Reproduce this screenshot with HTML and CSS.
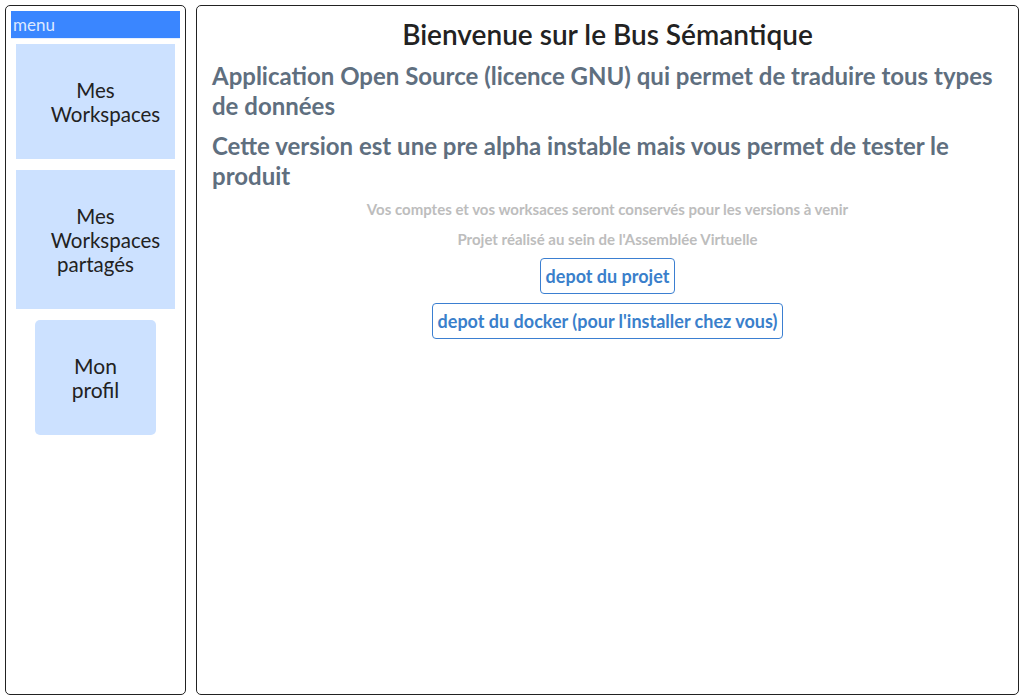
FILE: index.html
```html
<!DOCTYPE html>
<html lang="fr">
<head>
<meta charset="utf-8">
<title>Bus Sémantique</title>
<link rel="stylesheet" href="styles.css">
</head>
<body>
<div class="layout">
  <aside class="sidebar">
    <div class="menu-head">menu</div>
    <div class="card"><span>Mes</span><span class="shift">Workspaces</span></div>
    <div class="card"><span>Mes</span><span class="shift">Workspaces</span><span>partagés</span></div>
    <div class="card card-round"><span>Mon</span><span>profil</span></div>
  </aside>
  <main class="content">
    <h1 class="title">Bienvenue sur le Bus Sémantique</h1>
    <p class="lead">Application Open Source (licence GNU) qui permet de traduire tous types de données</p>
    <p class="lead lead-last">Cette version est une pre alpha instable mais vous permet de tester le produit</p>
    <p class="note">Vos comptes et vos worksaces seront conservés pour les versions à venir</p>
    <p class="note note-last">Projet réalisé au sein de l'Assemblée Virtuelle</p>
    <div class="links">
      <a class="btn" href="#">depot du projet</a>
      <a class="btn" href="#">depot du docker (pour l'installer chez vous)</a>
    </div>
  </main>
</div>
</body>
</html>
```
FILE: styles.css
```css
html, body {
  margin: 0;
  padding: 0;
  background: #fff;
}
body {
  padding: 5px;
  font-family: Lato, "Noto Sans", sans-serif;
  box-sizing: border-box;
  height: 700px;
}
.layout {
  display: flex;
  gap: 10px;
  height: 690px;
}
.sidebar {
  width: 181px;
  box-sizing: border-box;
  border: 1px solid #222;
  border-radius: 5px;
  padding: 5px;
  display: flex;
  flex-direction: column;
  align-items: stretch;
}
.menu-head {
  background: #3a86ff;
  color: #dde9ff;
  font-size: 17px;
  line-height: 27px;
  height: 27px;
  padding-left: 2px;
  border-bottom: 1px solid #e6efff;
  margin-bottom: 5px;
}
.card {
  background: #cce1ff;
  margin: 0 5px 11px;
  padding: 34px 0 33px;
  display: flex;
  flex-direction: column;
  align-items: center;
  font-size: 20.5px;
  line-height: 24px;
  color: #222;
}
.card .shift {
  padding-left: 20px;
}
.card-round {
  align-self: center;
  width: 121px;
  border-radius: 5px;
  font-size: 21px;
}
.content {
  flex: 1;
  box-sizing: border-box;
  border: 1px solid #222;
  border-radius: 5px;
  padding: 11px 15px;
  display: flex;
  flex-direction: column;
}
.title {
  margin: 0 0 10px;
  text-align: center;
  font-size: 28px;
  font-weight: 600;
  line-height: 34px;
  color: #222;
}
.lead {
  margin: 0 0 10px;
  font-size: 24px;
  font-weight: 700;
  line-height: 30px;
  color: #5f6f7f;
}
.lead-last {
  margin-bottom: 9px;
}
.note {
  margin: 0 0 12px;
  text-align: center;
  font-size: 15px;
  font-weight: 700;
  line-height: 18px;
  color: #bdbdbd;
}
.note-last {
  margin-bottom: 10px;
}
.links {
  display: flex;
  flex-direction: column;
  align-items: center;
  gap: 9px;
}
.btn {
  display: inline-block;
  border: 1px solid #3b7fd1;
  border-radius: 4px;
  padding: 0 5px;
  line-height: 34px;
  font-size: 18px;
  font-weight: 700;
  color: #3a7fcb;
  text-decoration: none;
}
```
